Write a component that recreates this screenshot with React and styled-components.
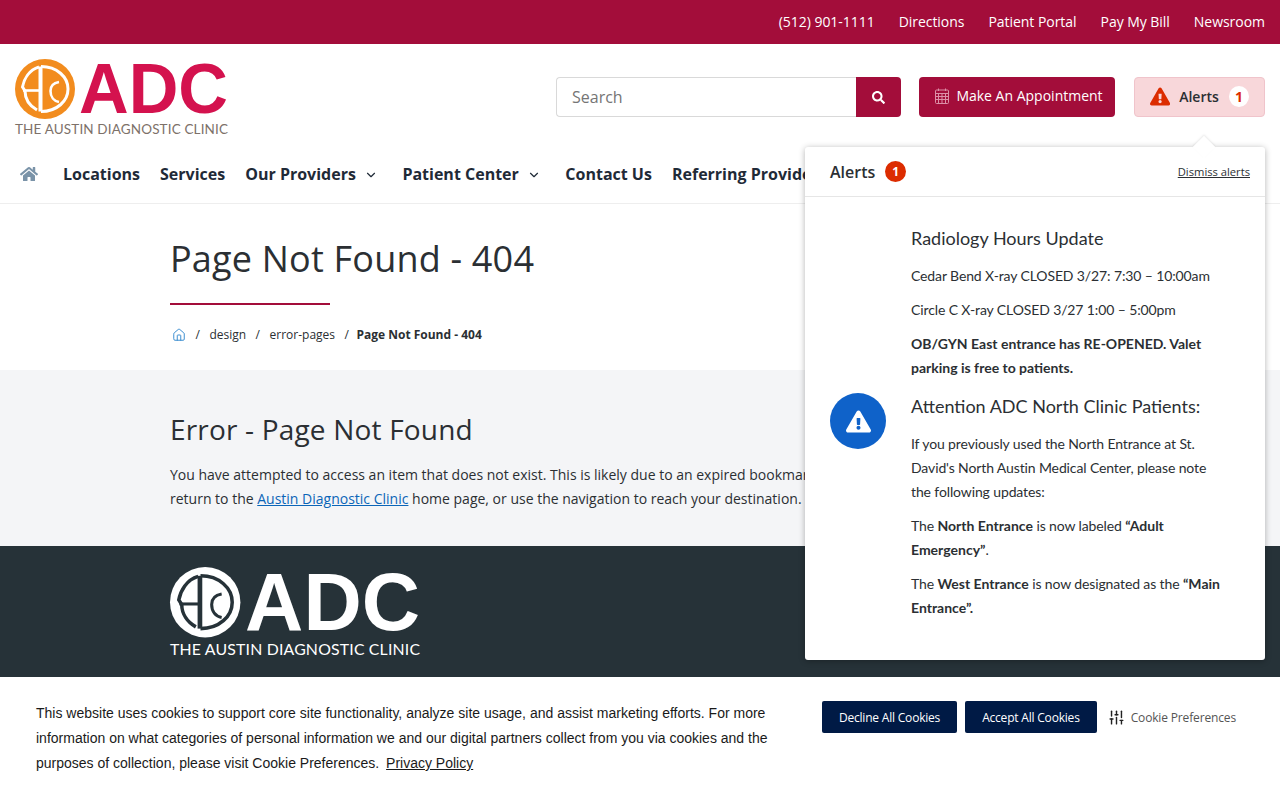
import React from "react";
import styled, { createGlobalStyle } from "styled-components";
import { FaHome, FaSearch, FaExclamationTriangle } from "react-icons/fa";
import { ChevronDown, Home, SlidersVertical } from "lucide-react";

const topLinks = ["(512) 901-1111", "Directions", "Patient Portal", "Pay My Bill", "Newsroom"];

const Logo = ({ width, mark, ring, letters, tag }) => (
  <svg width={width} viewBox="0 0 213 78" style={{ display: "block", overflow: "visible" }}>
    <circle cx="30" cy="30" r="30" fill={mark} />
    <g fill="none" stroke={ring}>
      <path d="M26 7.5C42 7.5 53 18 53 30C53 42 42 52.5 26 52.5" strokeWidth="3" />
      <path d="M24 8C14 11 9 20 7.5 28L10 32C10 40 15 47 22 51" strokeWidth="3" />
      <path d="M25.5 7.5V52.5" strokeWidth="4" />
      <path d="M8 31.5H25" strokeWidth="2.6" />
      <path d="M44 23C38 24 35.5 27 35.5 32C35.5 38 39 42 44 43" strokeWidth="2.6" />
    </g>
    <text x="64" y="54" fontFamily="'Liberation Sans', sans-serif" fontWeight="700" fontSize="70" textLength="149" lengthAdjust="spacingAndGlyphs" fill={letters}>ADC</text>
    <text x="0" y="75" fontFamily="'Lato', sans-serif" fontSize="13.5" textLength="213" lengthAdjust="spacing" fill={tag}>THE AUSTIN DIAGNOSTIC CLINIC</text>
  </svg>
);

const CalendarIcon = () => (
  <svg width="14" height="16" viewBox="0 0 14 16" fill="none" stroke="#dc8fa6" strokeWidth="1">
    <rect x="0.5" y="2" width="13" height="13.5" rx="1" />
    <path d="M0.5 5.5h13M0.5 8.5h13M0.5 11.5h13M3.5 5.5v10M7 5.5v10M10.5 5.5v10M3.5 0.5v2.5M10.5 0.5v2.5" />
  </svg>
);

export default function App() {
  return (
    <>
      <GlobalStyle />
      <TopBar>
        {topLinks.map((link) => (
          <TopLink key={link}>{link}</TopLink>
        ))}
      </TopBar>

      <Header>
        <Logo width={213} mark="#f28c1e" ring="#fff" letters="#d4124e" tag="#7d7169" />
        <Actions>
          <SearchBox>
            <SearchInput placeholder="Search" />
            <SearchButton><FaSearch size={13} /></SearchButton>
          </SearchBox>
          <AppointmentButton><CalendarIcon />Make An Appointment</AppointmentButton>
          <AlertsButton>
            <FaExclamationTriangle size={21} color="#dc2c00" />
            <span>Alerts</span>
            <AlertsCount>1</AlertsCount>
          </AlertsButton>
        </Actions>
      </Header>

      <Nav>
        <NavHome><FaHome size={18} /></NavHome>
        <NavItem>Locations</NavItem>
        <NavItem>Services</NavItem>
        <NavItem>Our Providers<ChevronDown size={14} /></NavItem>
        <NavItem>Patient Center<ChevronDown size={14} /></NavItem>
        <NavItem>Contact Us</NavItem>
        <NavItem>Referring Providers</NavItem>
      </Nav>

      <TitleSection>
        <PageTitle>Page Not Found - 404</PageTitle>
        <TitleRule />
        <Crumbs>
          <Home size={14} color="#2f86cc" strokeWidth={1.6} />
          <Slash>/</Slash>
          <span>design</span>
          <Slash>/</Slash>
          <span>error-pages</span>
          <Slash>/</Slash>
          <b>Page Not Found - 404</b>
        </Crumbs>
      </TitleSection>

      <ErrorSection>
        <ErrorTitle>Error - Page Not Found</ErrorTitle>
        <ErrorText>
          You have attempted to access an item that does not exist. This is likely due to an expired bookmark or an outdated link. Please
          <br />
          return to the <a href="#home">Austin Diagnostic Clinic</a> home page, or use the navigation to reach your destination.
        </ErrorText>
      </ErrorSection>

      <Footer>
        <Logo width={250} mark="#fff" ring="#263238" letters="#fff" tag="#fff" />
      </Footer>

      <AlertsPanel>
        <PanelArrow />
        <PanelHeader>
          <PanelTitle>Alerts</PanelTitle>
          <PanelCount>1</PanelCount>
          <DismissLink href="#dismiss">Dismiss alerts</DismissLink>
        </PanelHeader>
        <PanelBody>
          <AlertBadge><FaExclamationTriangle size={25} color="#fff" /></AlertBadge>
          <AlertContent>
            <AlertHeading>Radiology Hours Update</AlertHeading>
            <AlertText>Cedar Bend X-ray CLOSED 3/27: 7:30 – 10:00am</AlertText>
            <AlertText>Circle C X-ray CLOSED 3/27 1:00 – 5:00pm</AlertText>
            <AlertText><b>OB/GYN East entrance has RE-OPENED. Valet parking is free to patients.</b></AlertText>
            <AlertHeading>Attention ADC North Clinic Patients:</AlertHeading>
            <AlertText>If you previously used the North Entrance at St. David's North Austin Medical Center, please note the following updates:</AlertText>
            <AlertText>The <b>North Entrance</b> is now labeled <b>“Adult Emergency”</b>.</AlertText>
            <AlertText>The <b>West Entrance</b> is now designated as the <b>“Main Entrance”.</b></AlertText>
          </AlertContent>
        </PanelBody>
      </AlertsPanel>

      <CookieBanner>
        <CookieText>
          This website uses cookies to support core site functionality, analyze site usage, and assist marketing efforts. For more information on what categories of personal information we and our digital partners collect from you via cookies and the purposes of collection, please visit Cookie Preferences. <a href="#privacy">Privacy Policy</a>
        </CookieText>
        <CookieActions>
          <CookieButton>Decline All Cookies</CookieButton>
          <CookieButton>Accept All Cookies</CookieButton>
          <CookiePrefs><SlidersVertical size={17} color="#222" />Cookie Preferences</CookiePrefs>
        </CookieActions>
      </CookieBanner>
    </>
  );
}

const GlobalStyle = createGlobalStyle`
  * { box-sizing: border-box; }
  html, body { margin: 0; height: 800px; overflow: hidden; background: #fff; }
  body { font-family: "Open Sans", sans-serif; color: #2b2f33; }
`;

const TopBar = styled.div`
  height: 44px;
  background: #a30d3a;
  display: flex;
  justify-content: flex-end;
  align-items: center;
  gap: 24px;
  padding: 0 15px 2px 0;
`;

const TopLink = styled.a`
  color: #fff;
  font-size: 14px;
  font-weight: 500;
  letter-spacing: -0.04px;
`;

const Header = styled.header`
  height: 108px;
  display: flex;
  justify-content: space-between;
  align-items: flex-start;
  padding: 15px 15px 0;
`;

const Actions = styled.div`
  display: flex;
  align-items: flex-start;
  padding-top: 18px;
`;

const SearchBox = styled.div`
  display: flex;
  width: 345px;
  height: 40px;
  margin-right: 18px;
`;

const SearchInput = styled.input`
  width: 300px;
  border: 1px solid #d9d9d9;
  border-right: none;
  border-radius: 4px 0 0 4px;
  padding: 0 15px;
  font: 16px "Open Sans", sans-serif;
  outline: none;
  &::placeholder { color: #757575; opacity: 1; }
`;

const SearchButton = styled.button`
  width: 45px;
  border: none;
  border-radius: 0 4px 4px 0;
  background: #a30d3a;
  color: #fff;
  display: flex;
  align-items: center;
  justify-content: center;
`;

const AppointmentButton = styled.button`
  height: 40px;
  width: 196px;
  margin-right: 19px;
  padding: 0 0 3px 4px;
  border: none;
  border-radius: 4px;
  background: #a30d3a;
  color: #fff;
  font: 500 14px "Open Sans", sans-serif;
  display: flex;
  align-items: center;
  justify-content: center;
  gap: 7px;
`;

const AlertsButton = styled.button`
  height: 40px;
  width: 131px;
  border: 1px solid #f0c4cb;
  border-radius: 4px;
  background: #f8d7da;
  color: #2b2f33;
  font: 600 14px "Open Sans", sans-serif;
  display: flex;
  align-items: center;
  padding: 0 15px 1px;
  gap: 9px;
`;

const AlertsCount = styled.span`
  width: 21px;
  height: 21px;
  border-radius: 50%;
  background: #fff;
  color: #dc2c00;
  font-weight: 700;
  margin-left: 1px;
  display: flex;
  align-items: center;
  justify-content: center;
`;

const Nav = styled.nav`
  height: 52px;
  display: flex;
  align-items: flex-start;
  padding: 11px 0 0 20px;
  gap: 20px;
  border-bottom: 1px solid #eee;
`;

const NavHome = styled.span`
  color: #7a93a8;
  width: 23px;
  height: 22px;
  display: flex;
  align-items: center;
`;

const NavItem = styled.a`
  font-size: 16px;
  font-weight: 700;
  line-height: 22px;
  color: #1f2a37;
  display: flex;
  align-items: center;
  white-space: nowrap;
  svg { margin: 1px 4.5px 0 8px; }
`;

const TitleSection = styled.section`
  height: 166px;
  padding: 30px 170px 0;
`;

const PageTitle = styled.h1`
  margin: 0;
  font-size: 36px;
  font-weight: 500;
  line-height: 50px;
  letter-spacing: 0.2px;
  color: #2b2f33;
`;

const TitleRule = styled.div`
  width: 160px;
  height: 2px;
  margin-top: 19px;
  background: #a30d3a;
`;

const Crumbs = styled.div`
  display: flex;
  align-items: center;
  gap: 7px;
  margin-top: 21px;
  padding-left: 2px;
  font-size: 12px;
  line-height: 18px;
  b { font-weight: 700; margin-left: -2px; }
`;

const Slash = styled.span`
  margin: 0 2.5px;
`;

const ErrorSection = styled.section`
  height: 176px;
  background: #f4f5f7;
  padding: 38px 170px 0;
`;

const ErrorTitle = styled.h2`
  margin: 0 0 13px;
  font-size: 28px;
  font-weight: 500;
  line-height: 42px;
  letter-spacing: 0.18px;
`;

const ErrorText = styled.p`
  margin: 0;
  font-size: 14px;
  line-height: 24px;
  white-space: nowrap;
  a { color: #0b65b8; }
`;

const Footer = styled.footer`
  height: 254px;
  background: #263238;
  padding: 21px 170px 0;
`;

const AlertsPanel = styled.aside`
  position: absolute;
  top: 147px;
  left: 805px;
  width: 460px;
  height: 513px;
  background: #fff;
  border-radius: 3px;
  box-shadow: 0 1px 6px rgba(0, 0, 0, 0.3);
  font-family: "Lato", sans-serif;
`;

const PanelArrow = styled.span`
  position: absolute;
  top: -8px;
  left: 391px;
  width: 16px;
  height: 16px;
  background: #fff;
  transform: rotate(45deg);
  box-shadow: -1px -1px 2px rgba(0, 0, 0, 0.08);
`;

const PanelHeader = styled.div`
  position: relative;
  height: 50px;
  display: flex;
  align-items: center;
  padding: 0 15px 0 25px;
  border-bottom: 1px solid #e6e6e6;
`;

const PanelTitle = styled.span`
  font-size: 16px;
  font-family: "Open Sans", sans-serif;
  font-weight: 600;
`;

const PanelCount = styled.span`
  width: 21px;
  height: 21px;
  margin-left: 10px;
  border-radius: 50%;
  background: #dc2c00;
  color: #fff;
  font: 700 12px "Open Sans", sans-serif;
  display: flex;
  align-items: center;
  justify-content: center;
`;

const DismissLink = styled.a`
  margin-left: auto;
  font: 11.2px "Open Sans", sans-serif;
  color: #2b2f33;
  text-decoration: underline;
`;

const PanelBody = styled.div`
  display: flex;
  align-items: center;
  padding: 0 25px;
  height: 448px;
  gap: 25px;
`;

const AlertBadge = styled.div`
  flex: none;
  width: 56px;
  height: 56px;
  border-radius: 50%;
  background: #0f62c9;
  display: flex;
  align-items: center;
  justify-content: center;
`;

const AlertContent = styled.div`
  flex: 1;
  padding: 12px 15px 0 0;
`;

const AlertHeading = styled.h3`
  margin: 0 0 12px;
  font-size: 18px;
  font-weight: 400;
  line-height: 28px;
  color: #2b2f33;
  p + & { margin-top: 12px; }
`;

const AlertText = styled.p`
  margin: 0 0 10px;
  font-size: 14px;
  line-height: 24px;
  letter-spacing: -0.12px;
  color: #2b2f33;
  b { font-weight: 700; letter-spacing: 0; }
`;

const CookieBanner = styled.div`
  position: fixed;
  left: 0;
  right: 0;
  bottom: 0;
  height: 123px;
  background: #fff;
  display: flex;
  padding: 24px 44px 0 36px;
  justify-content: space-between;
`;

const CookieText = styled.p`
  margin: 0;
  width: 745px;
  font: 14px/25px "Liberation Sans", Arial, sans-serif;
  color: #1a1a1a;
  a { color: #1a1a1a; margin-left: 3px; }
`;

const CookieActions = styled.div`
  display: flex;
  align-items: flex-start;
  gap: 8px;
`;

const CookieButton = styled.button`
  height: 32px;
  padding: 0 17px;
  border: none;
  border-radius: 2px;
  background: #001a45;
  color: #fff;
  font: 12px "Open Sans", sans-serif;
  letter-spacing: -0.2px;
`;

const CookiePrefs = styled.span`
  height: 32px;
  margin-left: 3px;
  display: flex;
  align-items: center;
  gap: 6px;
  font-size: 12px;
  letter-spacing: -0.15px;
  color: #555;
`;
